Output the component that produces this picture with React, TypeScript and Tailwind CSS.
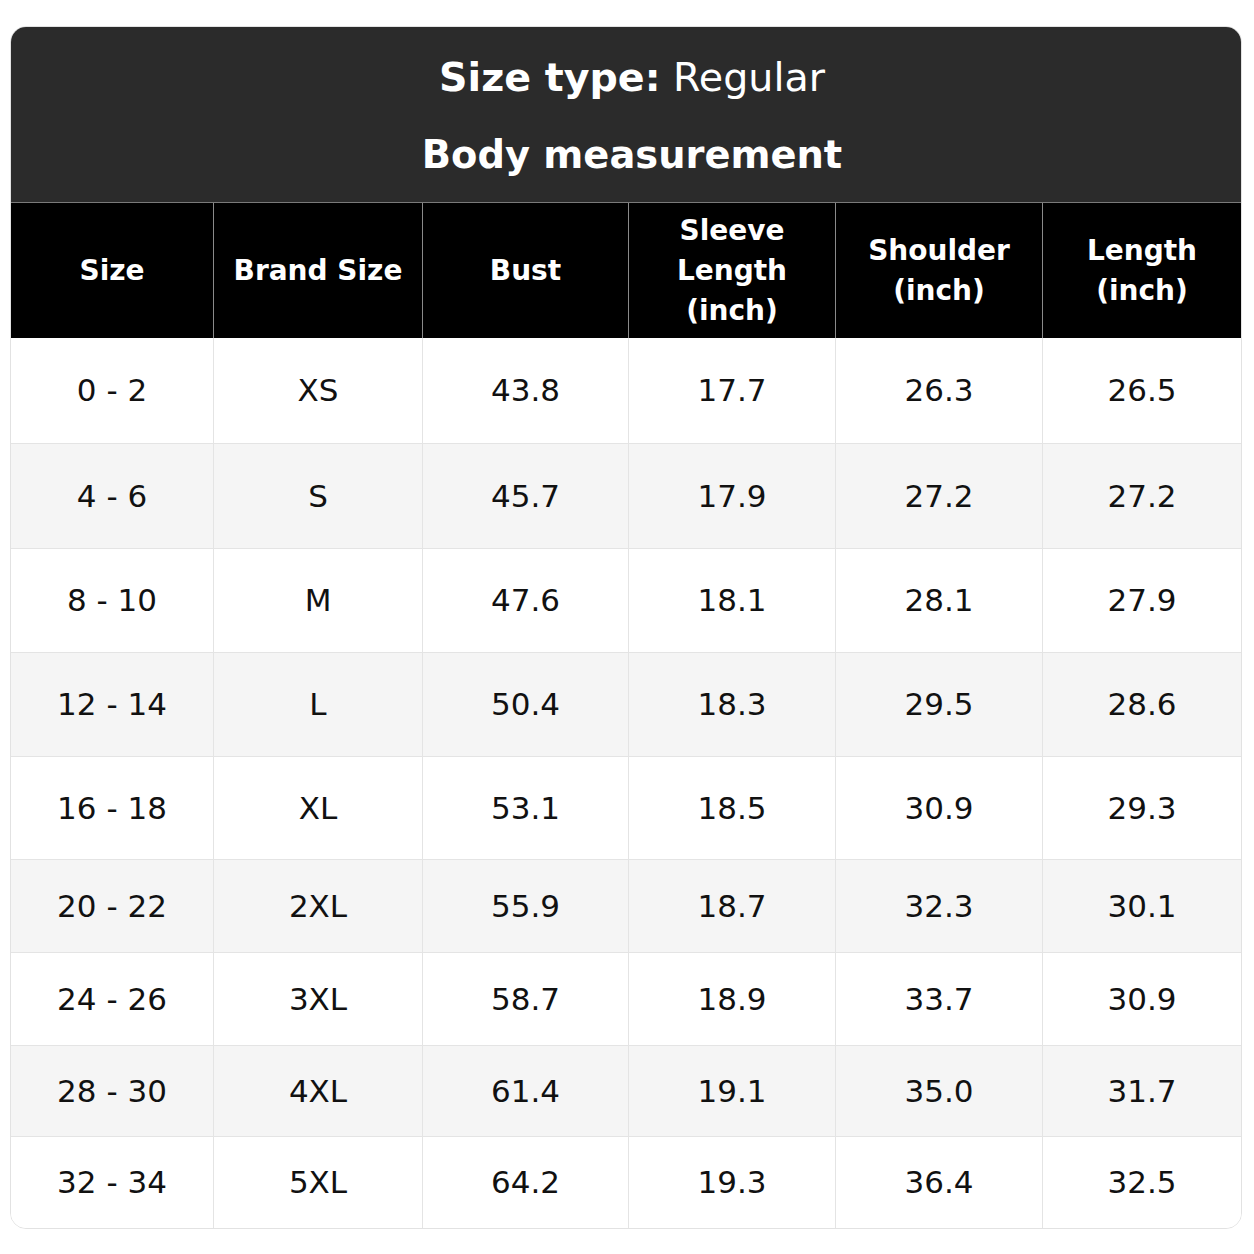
const columns = [
  ["Size"],
  ["Brand Size"],
  ["Bust"],
  ["Sleeve", "Length", "(inch)"],
  ["Shoulder", "(inch)"],
  ["Length", "(inch)"],
];

const rows = [
  { h: "h-[105px]", cells: ["0 - 2", "XS", "43.8", "17.7", "26.3", "26.5"] },
  { h: "h-[105px]", cells: ["4 - 6", "S", "45.7", "17.9", "27.2", "27.2"] },
  { h: "h-[104px]", cells: ["8 - 10", "M", "47.6", "18.1", "28.1", "27.9"] },
  { h: "h-[104px]", cells: ["12 - 14", "L", "50.4", "18.3", "29.5", "28.6"] },
  { h: "h-[103px]", cells: ["16 - 18", "XL", "53.1", "18.5", "30.9", "29.3"] },
  { h: "h-[93px]", cells: ["20 - 22", "2XL", "55.9", "18.7", "32.3", "30.1"] },
  { h: "h-[93px]", cells: ["24 - 26", "3XL", "58.7", "18.9", "33.7", "30.9"] },
  { h: "h-[91px]", cells: ["28 - 30", "4XL", "61.4", "19.1", "35.0", "31.7"] },
  { h: "h-[92px]", cells: ["32 - 34", "5XL", "64.2", "19.3", "36.4", "32.5"] },
];

const grid = "grid grid-cols-[202px_209px_206px_207px_207px_199px]";

const SizeChart = () => {
  return (
    <div className="min-h-screen bg-white pt-[26px] px-[10px] font-['DejaVu_Sans',sans-serif]">
      <div className="w-[1232px] rounded-[16px] border border-[#e2e2e2] overflow-hidden">
        {/* Title */}
        <div className="h-[175px] bg-[#2b2b2b] text-white flex flex-col items-center pt-[25px] pl-[12px]">
          <div className="text-[39.6px] leading-[50px]">
            <span className="font-bold">Size type:</span> Regular
          </div>
          <div className="text-[38.4px] leading-[50px] font-bold mt-[28px]">Body measurement</div>
        </div>

        {/* Header row */}
        <div className={`${grid} h-[136px] bg-black border-t border-[#7a7a7a]`}>
          {columns.map((lines, i) => (
            <div
              key={i}
              className={`flex flex-col items-center justify-center text-white font-bold text-[28px] leading-[40px] ${
                i > 0 ? "border-l border-[#8a8a8a]" : ""
              }`}
            >
              {lines.map((l) => (
                <span key={l}>{l}</span>
              ))}
            </div>
          ))}
        </div>

        {/* Data rows */}
        {rows.map((row, r) => (
          <div
            key={r}
            className={`${grid} ${row.h} ${r % 2 === 1 ? "bg-[#f5f5f5]" : "bg-white"} ${
              r > 0 ? "border-t border-[#e4e4e4]" : ""
            }`}
          >
            {row.cells.map((c, i) => (
              <div
                key={i}
                className={`flex items-center justify-center text-[31px] text-[#111] ${
                  i > 0 ? "border-l border-[#e4e4e4]" : ""
                }`}
              >
                {c}
              </div>
            ))}
          </div>
        ))}
      </div>
    </div>
  );
};

export default function App() {
  return <SizeChart />;
}
